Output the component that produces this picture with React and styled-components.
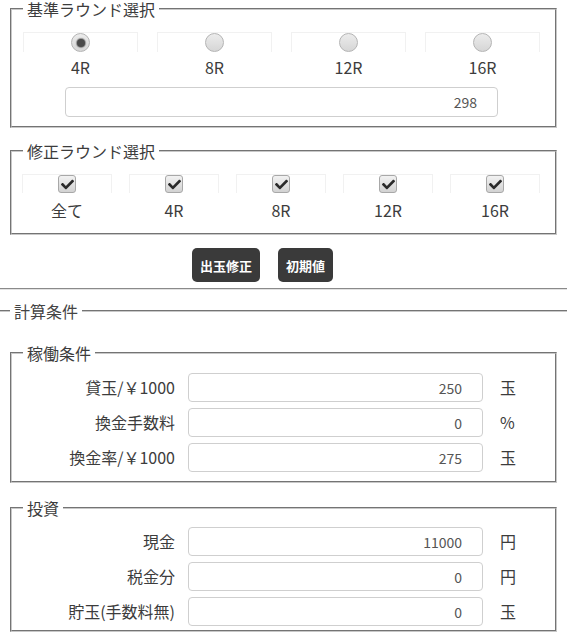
import styled, { createGlobalStyle } from 'styled-components'
import { FaCheck } from 'react-icons/fa'

const GlobalStyle = createGlobalStyle`
  html, body {
    margin: 0;
    padding: 0;
    background: #fff;
  }
  body {
    font-family: "Noto Sans CJK JP", "Noto Sans", sans-serif;
    color: #3c3c3c;
  }
`

const baseRounds = ['4R', '8R', '12R', '16R']
const fixRounds = ['全て', '4R', '8R', '12R', '16R']

const workRows = [
  { label: '貸玉/￥1000', value: '250', unit: '玉' },
  { label: '換金手数料', value: '0', unit: '%' },
  { label: '換金率/￥1000', value: '275', unit: '玉' },
]

const investRows = [
  { label: '現金', value: '11000', unit: '円' },
  { label: '税金分', value: '0', unit: '円' },
  { label: '貯玉(手数料無)', value: '0', unit: '玉' },
]

const App = () => {
  return (
    <Page>
      <GlobalStyle />
      <Box $top={0} $pt={14} $pb={9}>
        <Legend>基準ラウンド選択</Legend>
        <Choices $cols={4} $cell={115} $gap={19} $left={11}>
          {baseRounds.map((r, i) => (
            <Choice key={r}>
              <Cell $h={20}>
                <Radio $checked={i === 0} />
              </Cell>
              <ChoiceLabel $mt={5}>{r}</ChoiceLabel>
            </Choice>
          ))}
        </Choices>
        <WideInput readOnly value="298" />
      </Box>

      <Box $top={14} $pt={14} $pb={13}>
        <Legend>修正ラウンド選択</Legend>
        <Choices $cols={5} $cell={90} $gap={17} $left={10}>
          {fixRounds.map((r) => (
            <Choice key={r}>
              <Cell $h={19}>
                <Check>
                  <FaCheck />
                </Check>
              </Cell>
              <ChoiceLabel $mt={7}>{r}</ChoiceLabel>
            </Choice>
          ))}
        </Choices>
      </Box>

      <Buttons>
        <DarkButton>出玉修正</DarkButton>
        <DarkButton>初期値</DarkButton>
      </Buttons>

      <Divider />

      <Section>
        <SectionLegend>計算条件</SectionLegend>
        <Box $top={24} $pt={11} $pb={9} $inner>
          <Legend>稼働条件</Legend>
          <Rows>
            {workRows.map((row) => (
              <Row key={row.label}>
                <RowLabel>{row.label}</RowLabel>
                <NumInput readOnly value={row.value} />
                <Unit>{row.unit}</Unit>
              </Row>
            ))}
          </Rows>
        </Box>
        <Box $top={16} $pt={10} $pb={4} $inner>
          <Legend>投資</Legend>
          <Rows>
            {investRows.map((row) => (
              <Row key={row.label}>
                <RowLabel>{row.label}</RowLabel>
                <NumInput readOnly value={row.value} />
                <Unit>{row.unit}</Unit>
              </Row>
            ))}
          </Rows>
        </Box>
      </Section>
    </Page>
  )
}

const Page = styled.div`
  width: 567px;
  padding-bottom: 8px;
`

const Box = styled.fieldset`
  margin: ${(p) => p.$top}px ${(p) => (p.$inner ? 0 : 10)}px 0;
  padding: ${(p) => p.$pt}px 0 ${(p) => p.$pb}px;
  border: 2px groove #c8c8c8;
  min-width: 0;
`

const Legend = styled.legend`
  margin-left: 11px;
  padding: 0 4px;
  font-size: 16px;
  line-height: 18px;
  color: #3c3c3c;
`

const Choices = styled.div`
  display: grid;
  grid-template-columns: repeat(${(p) => p.$cols}, ${(p) => p.$cell}px);
  column-gap: ${(p) => p.$gap}px;
  padding-left: ${(p) => p.$left}px;
`

const Choice = styled.div`
  display: flex;
  flex-direction: column;
  align-items: center;
`

const Cell = styled.div`
  box-sizing: border-box;
  width: 100%;
  height: ${(p) => p.$h}px;
  border: 1px solid #f1f1f1;
  border-bottom: none;
  display: flex;
  justify-content: center;
  align-items: flex-start;
`

const Radio = styled.span`
  box-sizing: border-box;
  width: 19px;
  height: 19px;
  border-radius: 50%;
  border: 1px solid #b4b4b4;
  background: linear-gradient(#ececec, #d6d6d6);
  display: flex;
  align-items: center;
  justify-content: center;

  &::after {
    content: '';
    display: ${(p) => (p.$checked ? 'block' : 'none')};
    width: 8px;
    height: 8px;
    border-radius: 50%;
    background: #4a4a4a;
    box-shadow: 0 0 1px 1px rgba(60, 60, 60, 0.5);
  }
`

const Check = styled.span`
  box-sizing: border-box;
  width: 18px;
  height: 18px;
  border-radius: 3px;
  border: 1px solid #a8a8a8;
  background: linear-gradient(#f2f2f2, #d2d2d2);
  display: flex;
  align-items: center;
  justify-content: center;
  color: #2a2a2a;

  svg {
    width: 13px;
    height: 13px;
  }
`

const ChoiceLabel = styled.div`
  margin-top: ${(p) => p.$mt}px;
  font-size: 16px;
  line-height: 20px;
  color: #3c3c3c;
`

const WideInput = styled.input`
  display: block;
  box-sizing: border-box;
  margin: 10px 0 0 53px;
  width: 433px;
  height: 30px;
  padding: 0 20px 0 8px;
  border: 1px solid #cfcfcf;
  border-radius: 4px;
  background: #fff;
  text-align: right;
  font-family: "Noto Sans CJK JP", "Noto Sans", sans-serif;
  font-size: 14px;
  color: #555;
  outline: none;
`

const Buttons = styled.div`
  display: flex;
  gap: 18px;
  margin-top: 13px;
  padding-left: 192px;
`

const DarkButton = styled.button`
  height: 34px;
  padding: 0 8px;
  border: none;
  border-radius: 5px;
  background: #3a3a3a;
  color: #fff;
  font-family: "Noto Sans CJK JP", "Noto Sans", sans-serif;
  font-size: 13px;
  font-weight: bold;
  cursor: pointer;
`

const Divider = styled.div`
  margin-top: 6px;
  height: 0;
  border-top: 1px solid #8a8a8a;
  border-bottom: 1px solid #e2e2e2;
`

const Section = styled.fieldset`
  margin: 12px 0 0;
  padding: 0 10px;
  border: none;
  border-top: 2px groove #c8c8c8;
  min-width: 0;
`

const SectionLegend = styled.legend`
  padding: 0 4px;
  font-size: 16px;
  line-height: 18px;
  color: #444;
`

const Rows = styled.div`
  display: flex;
  flex-direction: column;
  gap: 6px;
`

const Row = styled.div`
  display: grid;
  grid-template-columns: 163px 295px 1fr;
  column-gap: 13px;
  align-items: center;
`

const RowLabel = styled.div`
  text-align: right;
  font-size: 16px;
  line-height: 29px;
  color: #3c3c3c;
  white-space: nowrap;
`

const NumInput = styled(WideInput)`
  margin: 0;
  width: 295px;
  height: 29px;
`

const Unit = styled.div`
  padding-left: 4px;
  font-size: 16px;
  line-height: 29px;
  color: #3c3c3c;
`

export default App
